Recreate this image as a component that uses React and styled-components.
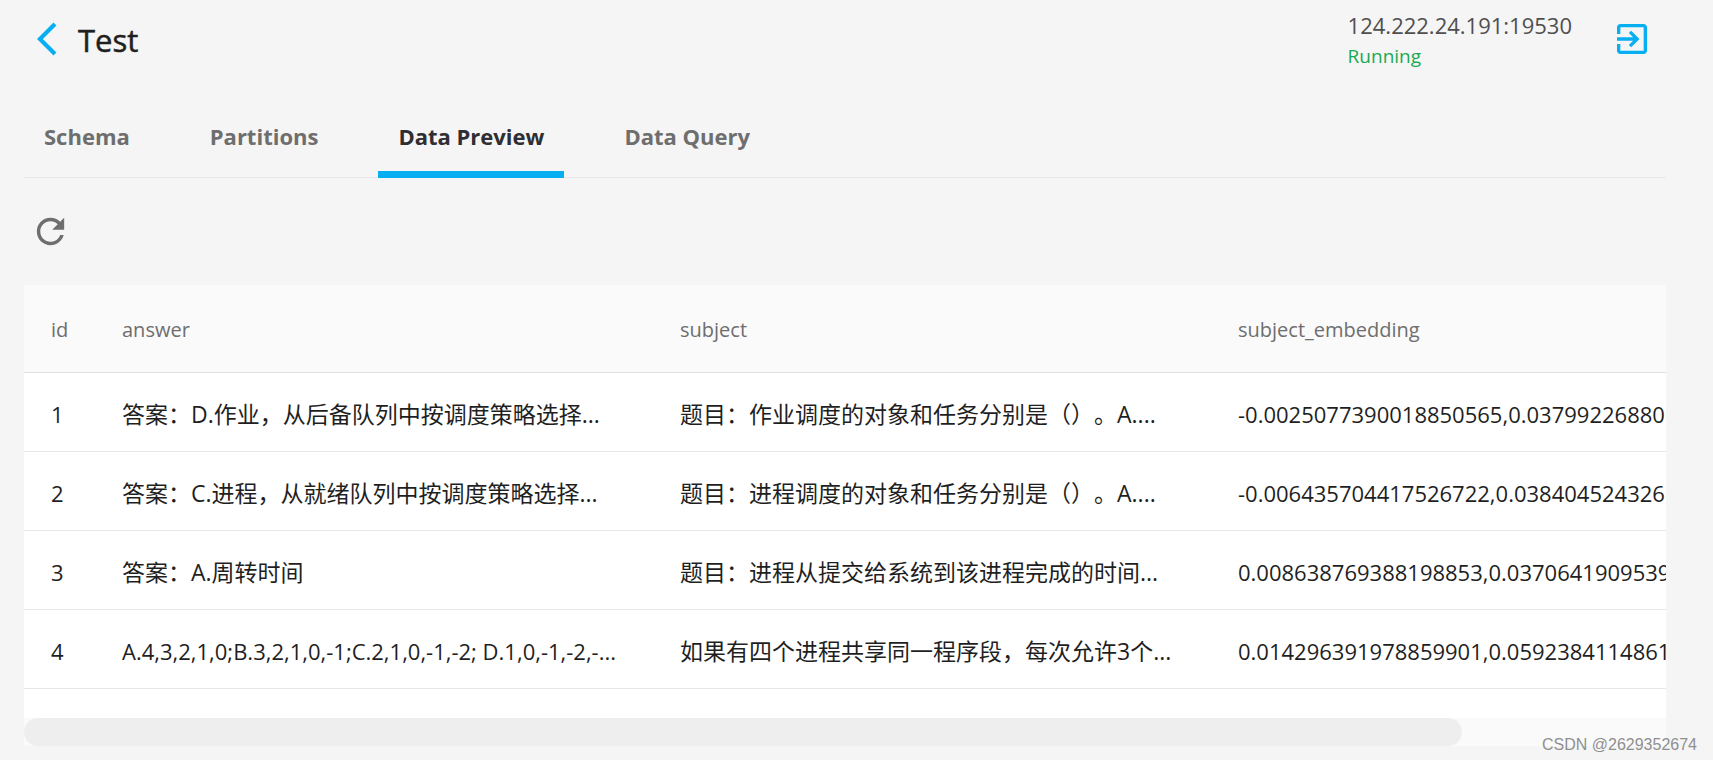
import React, { useState } from "react";
import styled, { createGlobalStyle } from "styled-components";

const GlobalStyle = createGlobalStyle`
  * {
    box-sizing: border-box;
  }
  body {
    margin: 0;
    background: #f5f5f5;
    color: #1f1f1f;
    font-family: "Open Sans", "Noto Sans CJK SC", sans-serif;
    font-size: 22px;
  }
  button {
    font-family: inherit;
    cursor: pointer;
  }
`;

const SPage = styled.div`
  position: relative;
  min-height: 100vh;
  padding: 0 47px 14px 24px;
  overflow: hidden;
`;
const SHeader = styled.header`
  display: flex;
  justify-content: space-between;
  align-items: flex-start;
  height: 96px;
  padding: 10px 14px 0 13px;
`;
const STitleGroup = styled.div`
  display: flex;
  align-items: flex-start;
  gap: 1px;
  padding-top: 9px;
`;
const STitle = styled.h1`
  margin: 0;
  font-size: 31px;
  font-weight: 400;
  line-height: 42px;
  -webkit-text-stroke: 0.5px currentColor;
`;
const SIconButton = styled.button`
  display: flex;
  padding: 0;
  background: none;
  border: none;
  color: ${({ $color }) => $color};

  svg {
    display: block;
    fill: currentColor;
  }
`;
const SAccount = styled.div`
  display: flex;
  align-items: flex-start;
  gap: 40px;

  ${SIconButton} {
    padding-top: 9px;
  }
`;
const SAddress = styled.div`
  color: #4f4f4f;
  line-height: 30px;
`;
const SStatus = styled.div`
  color: #1ba954;
  font-size: 19px;
  line-height: 32px;
`;
const STabs = styled.div`
  display: flex;
  gap: 40px;
  border-bottom: 1px solid #e9e9ed;
`;
const STab = styled.button`
  margin-bottom: -1px;
  padding: 24px 20px 19px;
  background: none;
  border: none;
  border-bottom: 7px solid ${({ $active }) => ($active ? "#06aff2" : "transparent")};
  color: ${({ $active }) => ($active ? "#2f2f33" : "#6e6e6e")};
  font-size: 22px;
  font-weight: 700;
  line-height: 32px;
`;
const SToolbar = styled.div`
  display: flex;
  align-items: center;
  height: 107px;
  padding-left: 6px;
`;
const SGrid = styled.div`
  background: #fff;
`;
const SScroller = styled.div`
  overflow-x: auto;
  scrollbar-width: none;
  padding-bottom: 29px;
`;
const STable = styled.table`
  table-layout: fixed;
  width: 1875px;
  border-collapse: separate;
  border-spacing: 0;
`;
const SCol = styled.col`
  width: ${({ $width }) => $width}px;
`;
const SHeadCell = styled.th`
  height: 88px;
  padding: 2px 27px 0;
  background: #fafafa;
  border-bottom: 1px solid #e0e0e0;
  color: #6e6e6e;
  font-size: 20px;
  font-weight: 400;
  text-align: left;
`;
const SCell = styled.td`
  height: 79px;
  padding: 3px 27px 0;
  border-bottom: 1px solid #e6e6e9;
  font-size: ${({ $han }) => ($han ? 23 : 22)}px;
  line-height: 32px;
  white-space: nowrap;
  text-spacing-trim: space-all;
`;
const STrack = styled.div`
  height: 28px;
  background: #fafafa;
`;
const SThumb = styled.div`
  width: 87.6%;
  height: 100%;
  background: #eeeeee;
  border-radius: 14px;
`;
const SWatermark = styled.div`
  position: absolute;
  right: 16px;
  bottom: 5px;
  color: #8f8f8f;
  font-family: "Liberation Sans", sans-serif;
  font-size: 16px;
  line-height: 20px;
`;

const tabs = ["Schema", "Partitions", "Data Preview", "Data Query"];

const columns = [
    { key: "id", width: 71 },
    { key: "answer", width: 558 },
    { key: "subject", width: 558 },
    { key: "subject_embedding", width: 688 },
];

const rows = [
    {
        id: "1",
        answer: "答案：D.作业，从后备队列中按调度策略选择...",
        subject: "题目：作业调度的对象和任务分别是（）。A....",
        subject_embedding: "-0.0025077390018850565,0.03799226880",
    },
    {
        id: "2",
        answer: "答案：C.进程，从就绪队列中按调度策略选择...",
        subject: "题目：进程调度的对象和任务分别是（）。A....",
        subject_embedding: "-0.006435704417526722,0.038404524326",
    },
    {
        id: "3",
        answer: "答案：A.周转时间",
        subject: "题目：进程从提交给系统到该进程完成的时间...",
        subject_embedding: "0.008638769388198853,0.0370641909539",
    },
    {
        id: "4",
        answer: "A.4,3,2,1,0;B.3,2,1,0,-1;C.2,1,0,-1,-2; D.1,0,-1,-2,-...",
        subject: "如果有四个进程共享同一程序段，每次允许3个...",
        subject_embedding: "0.014296391978859901,0.0592384114861",
    },
];

const isHan = (text) => /[\u4e00-\u9fff]/.test(text);

const BackIcon = () => (
    <svg width="40" height="40" viewBox="0 0 24 24" aria-hidden="true">
        <path d="M11.67 3.87L9.9 2.1 0 12l9.9 9.9 1.77-1.77L3.54 12z" />
    </svg>
);
const ExitIcon = () => (
    <svg width="40" height="40" viewBox="0 0 24 24" aria-hidden="true">
        <path d="M10.09 15.59L11.5 17l5-5-5-5-1.41 1.41L12.67 11H3v2h9.67l-2.58 2.59zM19 3H5c-1.11 0-2 .9-2 2v4h2V5h14v14H5v-4H3v4c0 1.1.89 2 2 2h14c1.1 0 2-.9 2-2V5c0-1.1-.9-2-2-2z" />
    </svg>
);
const RefreshIcon = () => (
    <svg width="41" height="41" viewBox="0 0 24 24" aria-hidden="true">
        <path d="M17.65 6.35C16.2 4.9 14.21 4 12 4c-4.42 0-7.99 3.58-7.99 8s3.57 8 7.99 8c3.73 0 6.84-2.55 7.73-6h-2.08c-.82 2.33-3.04 4-5.65 4-3.31 0-6-2.69-6-6s2.69-6 6-6c1.66 0 3.14.69 4.22 1.78L13 11h7V4l-2.35 2.35z" />
    </svg>
);

const App = () => {
    const [activeTab, setActiveTab] = useState("Data Preview");
    return (
        <SPage>
            <GlobalStyle />
            <SHeader>
                <STitleGroup>
                    <SIconButton $color="#06aff2" aria-label="back">
                        <BackIcon />
                    </SIconButton>
                    <STitle>Test</STitle>
                </STitleGroup>
                <SAccount>
                    <div>
                        <SAddress>124.222.24.191:19530</SAddress>
                        <SStatus>Running</SStatus>
                    </div>
                    <SIconButton $color="#06aff2" aria-label="disconnect">
                        <ExitIcon />
                    </SIconButton>
                </SAccount>
            </SHeader>
            <STabs role="tablist">
                {tabs.map((tab) => (
                    <STab
                        key={tab}
                        role="tab"
                        aria-selected={tab === activeTab}
                        $active={tab === activeTab}
                        onClick={() => setActiveTab(tab)}
                    >
                        {tab}
                    </STab>
                ))}
            </STabs>
            <SToolbar>
                <SIconButton $color="#6e6e6e" aria-label="refresh">
                    <RefreshIcon />
                </SIconButton>
            </SToolbar>
            <SGrid>
                <SScroller>
                    <STable>
                        <colgroup>
                            {columns.map((col) => <SCol key={col.key} $width={col.width} />)}
                        </colgroup>
                        <thead>
                            <tr>
                                {columns.map((col) => <SHeadCell key={col.key}>{col.key}</SHeadCell>)}
                            </tr>
                        </thead>
                        <tbody>
                            {rows.map((row) => (
                                <tr key={row.id}>
                                    {columns.map((col) => (
                                        <SCell key={col.key} $han={isHan(row[col.key])}>{row[col.key]}</SCell>
                                    ))}
                                </tr>
                            ))}
                        </tbody>
                    </STable>
                </SScroller>
                <STrack>
                    <SThumb />
                </STrack>
            </SGrid>
            <SWatermark>CSDN @2629352674</SWatermark>
        </SPage>
    );
};
export default App;
